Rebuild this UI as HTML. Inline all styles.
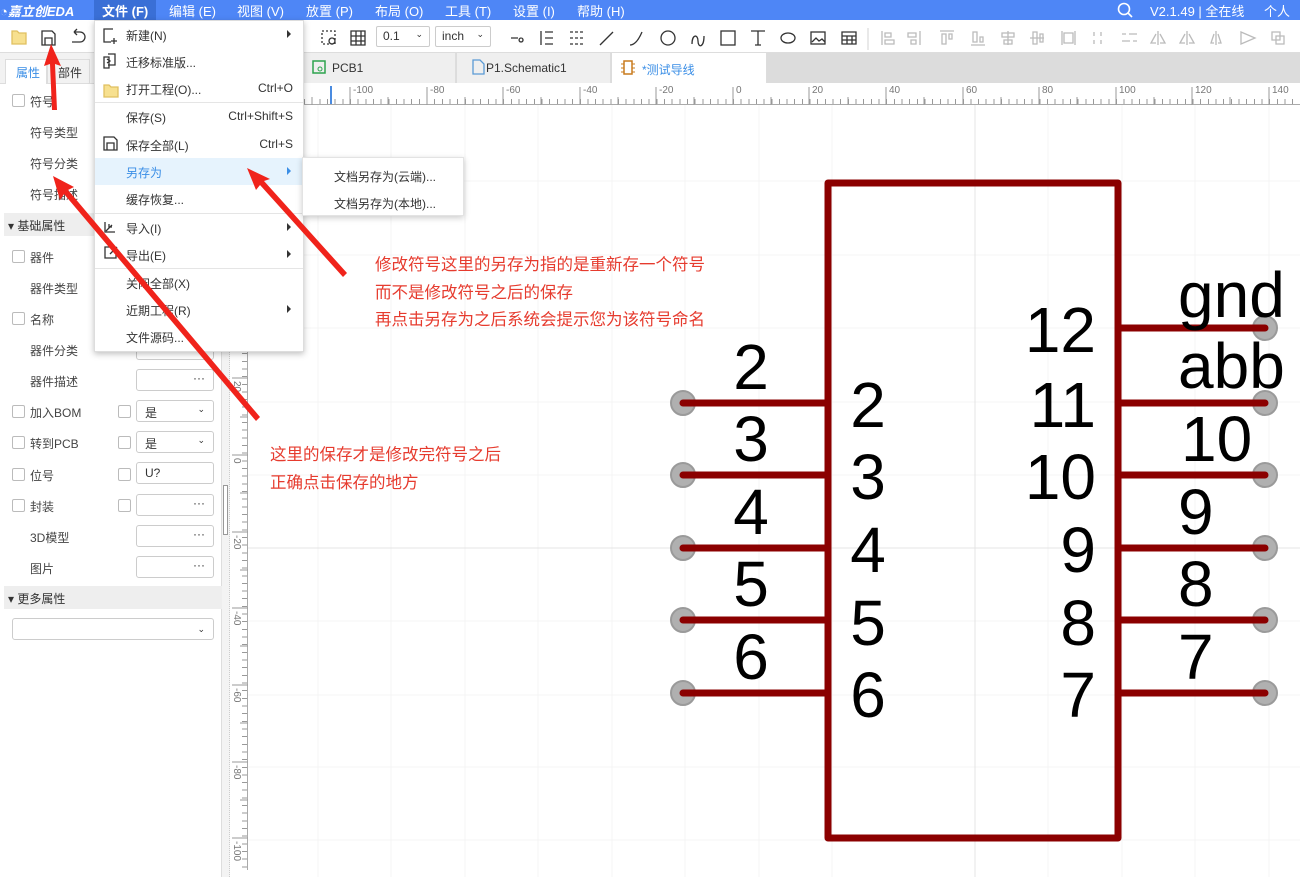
<!DOCTYPE html>
<html><head><meta charset="utf-8">
<style>
*{box-sizing:border-box;margin:0;padding:0}
body{width:1300px;height:877px;overflow:hidden;position:relative;background:#fff;font-family:"Liberation Sans","Noto Sans CJK SC",sans-serif;font-size:12px;color:#333}
.abs{position:absolute}
#menubar{left:0;top:0;width:1300px;height:20px;background:#4e86f6;color:#fff;font-size:13px}
#menubar span{position:absolute;top:1px}
#toolbar{left:0;top:20px;width:1300px;height:33px;background:#fff;border-bottom:1px solid #ddd}
.sel{position:absolute;top:6px;height:21px;border:1px solid #ccc;border-radius:2px;font-size:12px;padding:2px 6px;color:#333}
#tabs{left:303px;top:53px;width:997px;height:30px;background:#dcdcdc}
.tab{position:absolute;top:0;height:30px;background:#efefef;border-right:1px solid #ddd;font-size:12px;padding-top:8px}
#left{left:0;top:53px;width:222px;height:824px;background:#fff;border-right:1px solid #ddd}
.row{position:absolute;left:0;width:222px;height:22px;font-size:12px;color:#444}
.cb{position:absolute;width:13px;height:13px;border:1px solid #bbb;border-radius:2px;background:#fff}
.inp{position:absolute;left:136px;width:78px;height:22px;border:1px solid #ccc;border-radius:3px;background:#fff;font-size:12px;padding:3px 8px}
.hdr{position:absolute;left:4px;width:218px;height:23px;background:#eee;font-size:12px;padding:4px 0 0 4px}
#menu{left:94px;top:20px;width:210px;height:332px;background:#fff;box-shadow:0 2px 6px rgba(0,0,0,.25);border:1px solid #ddd}
.mi{position:absolute;left:0;width:208px;height:27px;font-size:12px;color:#333}
.mi .t{position:absolute;left:31px;top:6px}
.mi .k{position:absolute;right:10px;top:6px;color:#333}
.mi .ar{position:absolute;right:12px;top:9px;width:0;height:0;border-left:4px solid #333;border-top:4px solid transparent;border-bottom:4px solid transparent}
.sep{position:absolute;left:0;width:208px;height:1px;background:#e5e5e5}
#sub{left:302px;top:157px;width:162px;height:59px;background:#fff;box-shadow:0 2px 6px rgba(0,0,0,.2);border:1px solid #e3e3e3;font-size:12px}
.note{position:absolute;color:#e63b2e;font-size:16.5px;line-height:27.5px;white-space:nowrap}
</style></head><body>

<div id="menubar" class="abs">
  <span style="left:0;font-style:italic;font-weight:bold">◔嘉立创EDA</span>
  <div class="abs" style="left:94px;top:0;width:62px;height:20px;background:#3a6fd6"></div>
  <span style="left:102px;font-weight:bold">文件 (F)</span>
  <span style="left:169px">编辑 (E)</span>
  <span style="left:237px">视图 (V)</span>
  <span style="left:306px">放置 (P)</span>
  <span style="left:375px">布局 (O)</span>
  <span style="left:445px">工具 (T)</span>
  <span style="left:513px">设置 (I)</span>
  <span style="left:577px">帮助 (H)</span>
  <svg class="abs" style="left:1116px;top:2px" width="18" height="17" fill="none" stroke="#fff" stroke-width="1.6"><circle cx="8" cy="7" r="5.5"/><path d="M12 11l4 4"/></svg>
  <span style="left:1150px">V2.1.49 | 全在线</span>
  <span style="left:1264px">个人</span>
</div>

<div id="toolbar" class="abs">
  <svg class="abs" style="left:0;top:0" width="1300" height="33" fill="none" stroke="#333" stroke-width="1.3">
    <path d="M12 11h5l2 2h7v11H12z" fill="#f7e08f" stroke="#e0c060"/>
    <path d="M42 11h10l3 3v11H42z M45 18h7v7h-7z"/>
    <path d="M74 12h6a5 5 0 0 1 0 10h-8 M74 12l3-3 M74 12l3 3"/>
    <rect x="322" y="11" width="13" height="13" stroke-dasharray="2 2"/><circle cx="332" cy="21" r="3"/>
    <path d="M351 11h14v14h-14z M351 16h14 M351 21h14 M356 11v14 M361 11v14"/>
    <path d="M511 18h7 M521 18a2 2 0 1 0 .1 0"/>
    <path d="M541 11v14 M545 12h8 M545 18h8 M545 24h8"/>
    <path d="M570 12h14 M570 18h14 M570 24h14" stroke-dasharray="3 2"/>
    <path d="M600 25l13-13"/>
    <path d="M630 25c5 0 9-6 12-13"/>
    <circle cx="668" cy="18" r="7"/>
    <path d="M692 24c0-10 6-10 6-3s6 7 6-5"/>
    <rect x="721" y="11" width="14" height="14"/>
    <path d="M751 11h14 M758 11v14 M755 25h6"/>
    <ellipse cx="788" cy="18" rx="7" ry="5"/>
    <rect x="811" y="12" width="14" height="12"/><path d="M812 22l4-4 3 3 3-2 3 3"/>
    <path d="M842 12h14v12h-14z M842 16h14 M842 20h14 M847 16v8 M852 16v8"/>
    <path d="M868 8v22" stroke="#ddd"/>
    <g stroke="#bbb">
    <path d="M882 11v14 M885 13h6v4h-6z M885 20h9v4h-9z"/>
    <path d="M920 11v14 M908 13h8v4h-8z M911 20h5v4h-5z"/>
    <path d="M940 11h14 M942 14h4v10h-4z M949 14h3v5h-3z"/>
    <path d="M971 25h14 M973 12h4v10h-4z M980 17h3v5h-3z"/>
    <path d="M1008 11v14 M1002 13h12v4h-12z M1004 20h8v4h-8z"/>
    <path d="M1030 18h14 M1033 12h4v12h-4z M1040 14h3v8h-3z"/>
    <path d="M1062 11v14 M1075 11v14 M1064 13h9v10h-9z"/>
    <path d="M1094 12v4 M1094 20v4 M1101 12v4 M1101 20v4"/>
    <path d="M1122 14h4 M1129 14h8 M1122 21h8 M1133 21h4"/>
    <path d="M1158 11v14 M1156 14l-5 9h5 M1160 14l5 9h-5"/>
    <path d="M1187 11v14 M1185 14l-5 9h5 M1189 14l5 9h-5"/>
    <path d="M1216 11v14 M1214 14l-3 9h3 M1218 14l3 9h-3"/>
    <path d="M1241 12l14 6-14 6z"/>
    <path d="M1272 12h8v8h-8z M1276 16h8v8h-8z"/>
    </g>
  </svg>
  <div class="sel" style="left:376px;width:54px">0.1 <span style="float:right;font-size:9px">⌄</span></div>
  <div class="sel" style="left:435px;width:56px">inch <span style="float:right;font-size:9px">⌄</span></div>
</div>

<div id="tabs" class="abs">
  <div class="tab" style="left:0;width:153px"><svg class="abs" style="left:9px;top:7px" width="14" height="14"><rect x="1" y="1" width="12" height="12" fill="none" stroke="#2da44e" stroke-width="1.5"/><circle cx="8" cy="9" r="2" fill="none" stroke="#2da44e"/></svg><span style="position:absolute;left:29px">PCB1</span></div>
  <div class="tab" style="left:154px;width:154px"><svg class="abs" style="left:15px;top:6px" width="13" height="16"><path d="M1 1h7l4 4v10H1z" fill="none" stroke="#5b9bd5" stroke-width="1.3"/></svg><span style="position:absolute;left:29px">P1.Schematic1</span></div>
  <div class="tab" style="left:309px;width:155px;background:#fff"><svg class="abs" style="left:9px;top:7px" width="14" height="16"><rect x="3" y="1" width="8" height="13" fill="none" stroke="#c87b1e" stroke-width="1.5"/><path d="M0 4h3M0 8h3M0 12h3M11 4h3M11 8h3M11 12h3" stroke="#c87b1e"/></svg><span style="position:absolute;left:30px;color:#3a8ee6">*测试导线</span></div>
</div>

<!-- canvas -->
<svg class="abs" style="left:248px;top:105px" width="1052" height="772">
  <g stroke="#f4f4f4" stroke-width="1">
    <path d="M70 0v772M143 0v772M217 0v772M290 0v772M364 0v772M437 0v772M511 0v772M584 0v772M800 0v772M874 0v772M947 0v772M1021 0v772"/>
    <path d="M0 76h1052M0 150h1052M0 223h1052M0 297h1052M0 370h1052M0 516h1052M0 590h1052M0 662h1052M0 735h1052"/>
  </g>
  <path d="M727 0v772M0 443h1052" stroke="#e4e4e4"/>
</svg>
<!-- top ruler -->
<div class="abs" style="left:303px;top:83px;width:997px;height:22px;background:#fff;border-bottom:1px solid #aaa;
background-image:repeating-linear-gradient(90deg,#999 0 1px,transparent 1px 7.66px);background-size:100% 5px;background-repeat:no-repeat;background-position:0.5px 100%"></div>
<div class="abs" style="left:248px;top:83px;width:55px;height:22px;background:#fff;border-bottom:1px solid #aaa"></div>
<div class="abs" style="left:330px;top:86px;width:2px;height:18px;background:#4a8be0"></div>
<div class="abs" style="left:0;top:83px;width:1300px;height:22px;font-size:10px;color:#777">
  <svg class="abs" style="left:0;top:0" width="1300" height="22"><g stroke="#999"><path d="M350 4v18M427 4v18M503 4v18M580 4v18M656 4v18M733 4v18M809 4v18M886 4v18M963 4v18M1039 4v18M1116 4v18M1192 4v18M1269 4v18 M388 14v8M465 14v8M541 14v8M618 14v8M694 14v8M771 14v8M848 14v8M924 14v8M1001 14v8M1077 14v8M1154 14v8M1230 14v8M312 14v8"/></g></svg>
  <span class="abs" style="left:353px;top:2px">-100</span><span class="abs" style="left:430px;top:2px">-80</span><span class="abs" style="left:506px;top:2px">-60</span><span class="abs" style="left:583px;top:2px">-40</span><span class="abs" style="left:659px;top:2px">-20</span><span class="abs" style="left:736px;top:2px">0</span><span class="abs" style="left:812px;top:2px">20</span><span class="abs" style="left:889px;top:2px">40</span><span class="abs" style="left:966px;top:2px">60</span><span class="abs" style="left:1042px;top:2px">80</span><span class="abs" style="left:1119px;top:2px">100</span><span class="abs" style="left:1195px;top:2px">120</span><span class="abs" style="left:1272px;top:2px">140</span>
</div>
<!-- left ruler -->
<div class="abs" style="left:230px;top:105px;width:18px;height:765px;background:#fff;border-right:1px solid #aaa;
background-image:repeating-linear-gradient(180deg,#999 0 1px,transparent 1px 7.66px);background-size:5px 100%;background-repeat:no-repeat;background-position:100% 3px"></div>
<svg class="abs" style="left:230px;top:105px" width="18" height="765" font-size="10" fill="#777" font-family="Liberation Sans">
  <g stroke="#999"><path d="M2 273h16M2 350h16M2 427h16M2 503h16M2 580h16M2 657h16M2 733h16M2 196h16M2 120h16M10 312h8M10 388h8M10 465h8M10 541h8M10 618h8M10 695h8"/></g>
  <text transform="translate(4,276) rotate(90)">20</text>
  <text transform="translate(4,353) rotate(90)">0</text>
  <text transform="translate(4,430) rotate(90)">-20</text>
  <text transform="translate(4,506) rotate(90)">-40</text>
  <text transform="translate(4,583) rotate(90)">-60</text>
  <text transform="translate(4,660) rotate(90)">-80</text>
  <text transform="translate(4,736) rotate(90)">-100</text>
</svg>
<div class="abs" style="left:222px;top:53px;width:8px;height:824px;background:#f3f3f3;border-right:1px dotted #ccc"></div>
<div class="abs" style="left:223px;top:485px;width:5px;height:50px;border:1px solid #999;background:#fff"></div>

<!-- schematic -->
<svg class="abs" style="left:0;top:0" width="1300" height="877" font-family="Liberation Sans" font-size="64" fill="#000">
  <g fill="#b0b0b0" stroke="#9a9a9a" stroke-width="2">
    <circle cx="683" cy="403" r="12"/><circle cx="683" cy="475" r="12"/><circle cx="683" cy="548" r="12"/><circle cx="683" cy="620" r="12"/><circle cx="683" cy="693" r="12"/>
    <circle cx="1265" cy="328" r="12"/><circle cx="1265" cy="403" r="12"/><circle cx="1265" cy="475" r="12"/><circle cx="1265" cy="548" r="12"/><circle cx="1265" cy="620" r="12"/><circle cx="1265" cy="693" r="12"/>
  </g>
  <g stroke="#8b0000" stroke-width="7" stroke-linecap="round">
    <rect x="828" y="183" width="290" height="655" fill="none" stroke-linejoin="round"/>
    <path d="M683 403H828M683 475H828M683 548H828M683 620H828M683 693H828"/>
    <path d="M1118 328H1265M1118 403H1265M1118 475H1265M1118 548H1265M1118 620H1265M1118 693H1265"/>
  </g>
  <g text-anchor="middle">
    <text x="751" y="389">2</text><text x="751" y="461">3</text><text x="751" y="534">4</text><text x="751" y="606">5</text><text x="751" y="679">6</text>
    <text x="868" y="427">2</text><text x="868" y="499">3</text><text x="868" y="572">4</text><text x="868" y="645">5</text><text x="868" y="717">6</text>
  </g>
  <g text-anchor="end">
    <text x="1096" y="352">12</text><text x="1096" y="427">11</text><text x="1096" y="499">10</text><text x="1096" y="572">9</text><text x="1096" y="645">8</text><text x="1096" y="717">7</text>
  </g>
  <g>
    <text x="1178" y="317">gnd</text><text x="1178" y="388">abb</text><text x="1181" y="461">10</text><text x="1178" y="534">9</text><text x="1178" y="606">8</text><text x="1178" y="679">7</text>
  </g>
</svg>

<!-- left panel -->
<div id="left" class="abs">
  <div class="abs" style="left:0;top:0;width:222px;height:31px;background:#f2f2f2;border-bottom:1px solid #ddd"></div>
  <div class="abs" style="left:5px;top:6px;width:42px;height:25px;background:#fff;border:1px solid #ddd;border-bottom:none;color:#3a8ee6;padding:4px 0 0 10px">属性</div>
  <div class="abs" style="left:47px;top:6px;width:43px;height:25px;border:1px solid #ddd;border-bottom:none;padding:4px 0 0 10px">部件</div>
</div>
<div class="abs" style="left:0;top:0;width:222px">
  <div class="cb" style="left:12px;top:94px"></div><div class="row" style="top:93px;left:30px">符号</div>
  <div class="row" style="top:124px;left:30px">符号类型</div>
  <div class="row" style="top:155px;left:30px">符号分类</div>
  <div class="row" style="top:186px;left:30px">符号描述</div>
  <div class="hdr" style="top:213px">▾ 基础属性</div>
  <div class="cb" style="left:12px;top:250px"></div><div class="row" style="top:249px;left:30px">器件</div>
  <div class="row" style="top:280px;left:30px">器件类型</div>
  <div class="cb" style="left:12px;top:312px"></div><div class="row" style="top:311px;left:30px">名称</div>
  <div class="row" style="top:342px;left:30px">器件分类</div>
  <div class="inp" style="top:338px"></div>
  <div class="row" style="top:373px;left:30px">器件描述</div>
  <div class="inp" style="top:369px;text-align:right;padding-top:1px">···</div>
  <div class="cb" style="left:12px;top:405px"></div><div class="row" style="top:404px;left:30px">加入BOM</div>
  <div class="cb" style="left:118px;top:405px"></div><div class="inp" style="top:400px">是<span style="float:right;font-size:9px">⌄</span></div>
  <div class="cb" style="left:12px;top:436px"></div><div class="row" style="top:435px;left:30px">转到PCB</div>
  <div class="cb" style="left:118px;top:436px"></div><div class="inp" style="top:431px">是<span style="float:right;font-size:9px">⌄</span></div>
  <div class="cb" style="left:12px;top:468px"></div><div class="row" style="top:467px;left:30px">位号</div>
  <div class="cb" style="left:118px;top:468px"></div><div class="inp" style="top:462px">U?</div>
  <div class="cb" style="left:12px;top:499px"></div><div class="row" style="top:498px;left:30px">封装</div>
  <div class="cb" style="left:118px;top:499px"></div><div class="inp" style="top:494px;text-align:right;padding-top:1px">···</div>
  <div class="row" style="top:529px;left:30px">3D模型</div>
  <div class="inp" style="top:525px;text-align:right;padding-top:1px">···</div>
  <div class="row" style="top:560px;left:30px">图片</div>
  <div class="inp" style="top:556px;text-align:right;padding-top:1px">···</div>
  <div class="hdr" style="top:586px">▾ 更多属性</div>
  <div class="inp" style="left:12px;width:202px;top:618px;text-align:right;font-size:9px;padding-top:5px">⌄</div>
</div>

<!-- file menu -->
<div id="menu" class="abs">
  <svg class="abs" style="left:0;top:0" width="30" height="330" fill="none" stroke="#333" stroke-width="1.3">
    <path d="M16 8h-7v13h7 M14 8h4 M19 17v6 M16 20h6"/>
    <path d="M9 36h5v11H9z M13 33h7v11h-7 M12 42l3-2-3-2"/>
    <path d="M9 64h5l2 2h7v10H9z" fill="#f7e08f" stroke="#e0c060"/>
    <path d="M9 116h10l3 3v10H9z M12 122h7v7h-7z"/>
    <path d="M10 201v10h10 M11 210l6-6 M14 203v3h3" />
    <path d="M18 226h-8v11h11v-8 M15 233l7-7"/>
  </svg>
  <div class="mi" style="top:0"><span class="t">新建(N)</span><i class="ar"></i></div>
  <div class="mi" style="top:27px"><span class="t">迁移标准版...</span></div>
  <div class="mi" style="top:54px"><span class="t">打开工程(O)...</span><span class="k">Ctrl+O</span></div>
  <div class="sep" style="top:81px"></div>
  <div class="mi" style="top:82px"><span class="t">保存(S)</span><span class="k">Ctrl+Shift+S</span></div>
  <div class="mi" style="top:110px"><span class="t">保存全部(L)</span><span class="k">Ctrl+S</span></div>
  <div class="mi" style="top:137px;background:#e6f3fd"><span class="t" style="color:#3a8ee6">另存为</span><i class="ar" style="border-left-color:#3a8ee6"></i></div>
  <div class="mi" style="top:164px"><span class="t">缓存恢复...</span></div>
  <div class="sep" style="top:192px"></div>
  <div class="mi" style="top:193px"><span class="t">导入(I)</span><i class="ar"></i></div>
  <div class="mi" style="top:220px"><span class="t">导出(E)</span><i class="ar"></i></div>
  <div class="sep" style="top:247px"></div>
  <div class="mi" style="top:248px"><span class="t">关闭全部(X)</span></div>
  <div class="mi" style="top:275px"><span class="t">近期工程(R)</span><i class="ar"></i></div>
  <div class="mi" style="top:302px"><span class="t">文件源码...</span></div>
</div>
<div id="sub" class="abs">
  <div class="abs" style="left:31px;top:10px">文档另存为(云端)...</div>
  <div class="abs" style="left:31px;top:37px">文档另存为(本地)...</div>
</div>

<!-- annotations -->
<div class="note" style="left:375px;top:252px">修改符号这里的另存为指的是重新存一个符号<br>而不是修改符号之后的保存<br>再点击另存为之后系统会提示您为该符号命名</div>
<div class="note" style="left:270px;top:442px">这里的保存才是修改完符号之后<br>正确点击保存的地方</div>

<svg class="abs" style="left:0;top:0" width="1300" height="877">
  <g fill="#f0231b">
    <polygon points="51,44 44,66 50,64 52,110 57,110 55,64 61,66"/>
    <polygon points="53,176 60,200 64,194 256,421 260,417 68,190 74,187"/>
    <polygon points="247,168 256,190 260,185 343,277 347,273 264,181 270,179"/>
  </g>
</svg>
</body></html>
